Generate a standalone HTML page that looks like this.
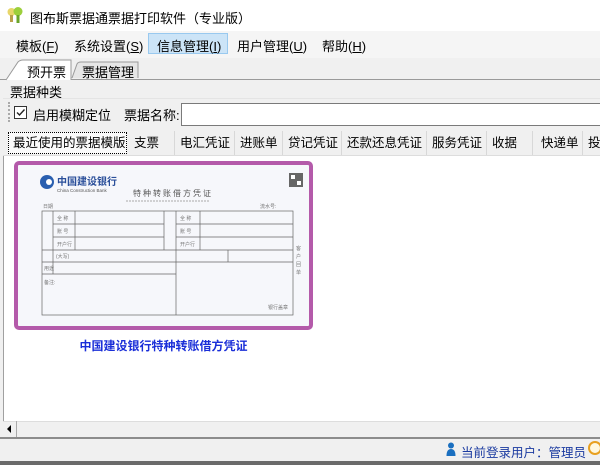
<!DOCTYPE html>
<html><head><meta charset="utf-8"><style>
*{margin:0;padding:0;box-sizing:border-box}
body{width:600px;height:465px;overflow:hidden;background:#f0f0f0;font-family:"Liberation Sans","Noto Sans CJK SC",sans-serif;font-size:12px;color:#000;position:relative}
.a{position:absolute}
.t{white-space:nowrap}
.tab{position:absolute;top:131px;height:24px;border-right:1px solid #d8d8d8;line-height:24px;padding-left:5px;font-size:12.5px}
.p td{border:1px solid #555}
</style></head><body>
<div class="a" style="left:0;top:0;width:600px;height:31px;background:#fff"></div>
<svg class="a" style="left:6px;top:6px" width="18" height="18" viewBox="0 0 18 18"><circle cx="5.5" cy="6" r="4" fill="#e8d66a"/><circle cx="12" cy="5.5" r="4.5" fill="#9ccf3c"/><rect x="4" y="9" width="3" height="7" fill="#b9a04a"/><rect x="10.5" y="9" width="3" height="8" fill="#6aa52a"/></svg>
<div class="a t" style="left:30px;top:8px;font-size:13px">图布斯票据通票据打印软件（专业版）</div>
<div class="a" style="left:0;top:31px;width:600px;height:27px;background:#f5f5f5"></div>
<div class="a" style="left:148px;top:33px;width:80px;height:21px;background:#cce4f7;border:1px solid #99c9ef"></div>
<div class="a t" style="left:16px;top:36px;font-size:13px">模板(<u>F</u>)</div>
<div class="a t" style="left:74px;top:36px;font-size:13px">系统设置(<u>S</u>)</div>
<div class="a t" style="left:157px;top:36px;font-size:13px">信息管理(<u>I</u>)</div>
<div class="a t" style="left:237px;top:36px;font-size:13px">用户管理(<u>U</u>)</div>
<div class="a t" style="left:322px;top:36px;font-size:13px">帮助(<u>H</u>)</div>
<svg class="a" style="left:0;top:58px" width="600" height="24"><path d="M6 22 L18 4 Q20 2 23 2 L71 2 L71 22" fill="#fff" stroke="#9a9a9a"/><path d="M72 20 L77 6 Q78 4 81 4 L138 4 L138 20" fill="#e6e6e6" stroke="#9a9a9a"/><line x1="0" y1="21.5" x2="6" y2="21.5" stroke="#9a9a9a"/><line x1="71" y1="21.5" x2="600" y2="21.5" stroke="#9a9a9a"/></svg>
<div class="a t" style="left:27px;top:62px;font-size:13px">预开票</div>
<div class="a t" style="left:82px;top:62px;font-size:13px">票据管理</div>
<div class="a t" style="left:10px;top:82px;font-size:13px">票据种类</div>
<div class="a" style="left:3px;top:98px;width:597px;height:30px;background:#f0f0f0;border-top:1px solid #e4e4e4"></div>
<div class="a" style="left:8px;top:102px;width:2px;height:20px;border-left:2px dotted #aaa"></div>
<div class="a" style="left:14px;top:106px;width:13px;height:13px;border:1px solid #333;background:#fff"></div>
<svg class="a" style="left:15px;top:107px" width="11" height="11"><path d="M2 5.5 L4.5 8 L9.5 2.5" stroke="#222" stroke-width="1.4" fill="none"/></svg>
<div class="a t" style="left:33px;top:105px;font-size:13px">启用模糊定位</div>
<div class="a t" style="left:124px;top:105px;font-size:13px">票据名称:</div>
<div class="a" style="left:181px;top:103px;width:420px;height:23px;background:#fff;border:1px solid #7a7a7a"></div>
<div class="a" style="left:3px;top:130px;width:597px;height:26px;background:#f0f0f0;border-bottom:1px solid #ddd"></div>
<div class="a t" style="left:8px;top:132px;width:119px;height:22px;border:1px dotted #000;line-height:20px;padding-left:4px;font-size:12.5px;background:#fafafa">最近使用的票据模版</div>
<div class="tab" style="left:129px;width:46px">支票</div>
<div class="tab" style="left:175px;width:60px">电汇凭证</div>
<div class="tab" style="left:235px;width:48px">进账单</div>
<div class="tab" style="left:283px;width:59px">贷记凭证</div>
<div class="tab" style="left:342px;width:85px">还款还息凭证</div>
<div class="tab" style="left:427px;width:60px">服务凭证</div>
<div class="tab" style="left:487px;width:46px">收据</div>
<div class="tab" style="left:533px;width:50px;padding-left:8px">快递单</div>
<div class="tab" style="left:583px;width:30px;border:none">投</div>
<div class="a" style="left:3px;top:156px;width:597px;height:265px;background:#fff;border-left:1px solid #a0a0a0"></div>
<div class="a" style="left:14px;top:161px;width:299px;height:169px;border:4px solid #b45aaa;border-radius:5px;background:#f6f7fb"></div>
<svg class="a" style="left:38px;top:172px" width="280" height="160">
<circle cx="9" cy="10" r="7" fill="#2a5fb0"/><circle cx="11" cy="10" r="3" fill="#fff"/>
<text x="19" y="13" font-size="10" font-weight="bold" fill="#2a4f9a" font-family="Noto Sans CJK SC">中国建设银行</text>
<text x="19" y="20" font-size="4.5" fill="#555">China Construction Bank</text>
<text x="95" y="24" font-size="8" fill="#555" letter-spacing="2" font-family="Noto Sans CJK SC">特种转账借方凭证</text>
<line x1="88" y1="29" x2="172" y2="29" stroke="#aaa" stroke-dasharray="2 1"/>
<rect x="251" y="1" width="14" height="14" fill="#666"/><rect x="253" y="3" width="4" height="4" fill="#fff"/><rect x="259" y="9" width="4" height="4" fill="#fff"/>
<text x="5" y="36" font-size="5" fill="#777">日期</text><text x="222" y="36" font-size="5" fill="#777">流水号:</text>
<g stroke="#666" stroke-width="0.7" fill="none"><rect x="4" y="39" width="251" height="104"/>
<line x1="4" y1="90" x2="255" y2="90"/><line x1="4" y1="78" x2="255" y2="78"/><line x1="4" y1="102" x2="138" y2="102"/>
<line x1="15" y1="39" x2="15" y2="102"/><line x1="37" y1="39" x2="37" y2="78"/><line x1="126" y1="39" x2="126" y2="78"/><line x1="138" y1="39" x2="138" y2="143"/><line x1="162" y1="39" x2="162" y2="78"/><line x1="190" y1="78" x2="190" y2="90"/>
<line x1="15" y1="52" x2="126" y2="52"/><line x1="15" y1="65" x2="126" y2="65"/><line x1="138" y1="52" x2="255" y2="52"/><line x1="138" y1="65" x2="255" y2="65"/></g>
<g font-size="5" fill="#777"><text x="19" y="48">全 称</text><text x="19" y="61">账 号</text><text x="19" y="74">开户行</text><text x="142" y="48">全 称</text><text x="142" y="61">账 号</text><text x="142" y="74">开户行</text><text x="18" y="86">(大写)</text><text x="6" y="98">用途</text><text x="6" y="112">备注:</text><text x="230" y="137">银行盖章</text><text x="258" y="78">客</text><text x="258" y="86">户</text><text x="258" y="94">回</text><text x="258" y="102">单</text></g>
</svg>
<div class="a t" style="left:14px;top:337px;width:299px;text-align:center;color:#1a2ed8;font-weight:bold;font-size:12px">中国建设银行特种转账借方凭证</div>
<div class="a" style="left:3px;top:421px;width:597px;height:16px;background:#f0f0f0;border-top:1px solid #ddd"></div>
<div class="a" style="left:3px;top:421px;width:14px;height:16px;border-right:1px solid #aaa"></div>
<svg class="a" style="left:6px;top:425px" width="6" height="8"><path d="M5 0 L1 4 L5 8Z" fill="#000"/></svg>
<div class="a" style="left:0;top:437px;width:600px;height:2px;background:#8c8c8c"></div>
<div class="a" style="left:0;top:439px;width:600px;height:22px;background:#f0f0f0"></div>
<div class="a" style="left:0;top:461px;width:600px;height:4px;background:#6a6a6a"></div>
<svg class="a" style="left:446px;top:442px" width="10" height="14"><circle cx="5" cy="3.5" r="3" fill="#1a6fc0"/><path d="M0.5 14 Q0.5 7 5 7 Q9.5 7 9.5 14Z" fill="#1a6fc0"/></svg>
<div class="a t" style="left:461px;top:442px;font-size:12.5px;color:#1a3aa0">当前登录用户：管理员</div>
<div class="a" style="left:588px;top:441px;width:14px;height:14px;border-radius:50%;border:2px solid #e8a020;background:#fff8e0"></div>
</body></html>
